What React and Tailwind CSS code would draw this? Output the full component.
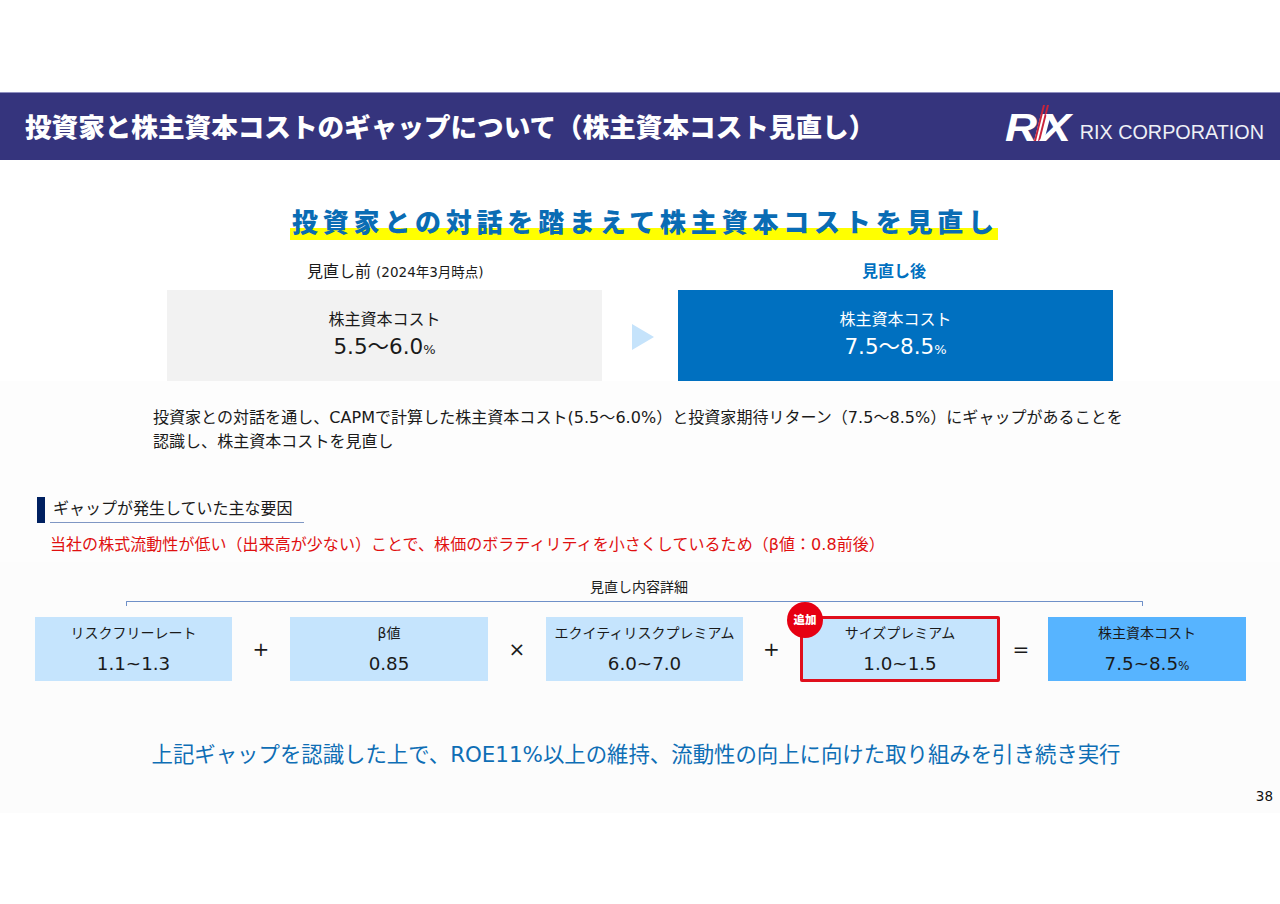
import React from "react";

const font = { fontFamily: '"DejaVu Sans", "Noto Sans CJK JP", sans-serif' };

function RixLogo() {
  return (
    <svg width="70" height="42" viewBox="0 0 70 42" overflow="visible" className="block">
      <text x="1" y="39" fontFamily="Liberation Sans" fontWeight="700" fontStyle="italic" fontSize="38" textLength="32" lengthAdjust="spacingAndGlyphs" fill="#fff">R</text>
      <polygon points="37,12 47,12 40,39 30,39" fill="#fff" />
      <polygon points="43,3 45,3 36,39 34,39" fill="#c8243c" />
      <polygon points="39,3 41,3 32,39 30,39" fill="#c8243c" />
      <text x="37" y="39" fontFamily="Liberation Sans" fontWeight="700" fontStyle="italic" fontSize="38" textLength="30" lengthAdjust="spacingAndGlyphs" fill="#fff">X</text>
    </svg>
  );
}

function FormulaBox({ label, value, unit, className }) {
  return (
    <div className={`h-[64px] flex flex-col items-center text-[#1a1a1a] ${className}`}>
      <div className="text-[14px] leading-[18px] mt-[7px]">{label}</div>
      <div className="text-[18.3px] leading-[24px] mt-[10px]">
        {value}
        {unit && <span className="text-[12px]">{unit}</span>}
      </div>
    </div>
  );
}

function Op({ children, className }) {
  return (
    <div className={`h-[64px] flex items-center justify-center text-[20px] text-[#1a1a1a] ${className}`}>
      {children}
    </div>
  );
}

export default function App() {
  return (
    <div className="w-[1280px] h-[904px] bg-white overflow-hidden" style={font}>
      <div className="h-[92px]" />

      <header className="h-[68px] bg-[#35347d] border-t border-[#8f8fc0] flex items-center justify-between">
        <h1 className="ml-[25px] mt-[3px] text-[26.6px] leading-none font-black text-white whitespace-nowrap">
          投資家と株主資本コストのギャップについて（株主資本コスト見直し）
        </h1>
        <div className="flex items-end mr-[16px] mb-[8px]">
          <RixLogo />
          <span
            className="ml-[6px] mb-[1px] text-[19.8px] leading-[22px] text-[#eef0f6] whitespace-nowrap"
            style={{ fontFamily: '"Liberation Sans", sans-serif' }}
          >
            RIX CORPORATION
          </span>
        </div>
      </header>

      <div className="h-[220px] bg-white pt-[47px]">
        <div className="ml-[290px] w-[708px] h-[33px] bg-[linear-gradient(transparent_21px,#ffff00_21px)]">
          <div className="pl-[2px] text-[26px] leading-[32px] font-black tracking-[4.8px] text-[#0a6cb4] whitespace-nowrap">
            投資家との対話を踏まえて株主資本コストを見直し
          </div>
        </div>

        <div className="flex mt-[22px] h-[28px] text-[16px] leading-[20px]">
          <div className="w-[555px] pl-[307px] text-[#1a1a1a] whitespace-nowrap">
            見直し前 <span className="text-[13.5px]">(2024年3月時点)</span>
          </div>
          <div className="ml-[307px] font-bold text-[#0070c0] whitespace-nowrap">見直し後</div>
        </div>

        <div className="flex items-center ml-[167px]">
          <div className="w-[435px] h-[91px] bg-[#f2f2f2] flex flex-col items-center pt-[19px] text-[#1a1a1a]">
            <div className="text-[16px] leading-[22px]">株主資本コスト</div>
            <div className="text-[21.5px] leading-[30px] mt-[1px]">
              5.5～6.0<span className="text-[13px]">%</span>
            </div>
          </div>
          <svg width="22" height="26" viewBox="0 0 22 26" className="ml-[30px] mr-[24px] mt-[3px]">
            <polygon points="0,0 22,13 0,26" fill="#c5e3fb" />
          </svg>
          <div className="w-[435px] h-[91px] bg-[#0070c0] flex flex-col items-center pt-[19px] text-white">
            <div className="text-[16px] leading-[22px]">株主資本コスト</div>
            <div className="text-[21.5px] leading-[30px] mt-[1px]">
              7.5～8.5<span className="text-[13px]">%</span>
            </div>
          </div>
        </div>
      </div>

      <div className="h-[181px] bg-[#fdfdfd] mt-[1px] pt-[25px]">
        <p className="ml-[153px] text-[16px] tracking-[0.04px] leading-[24px] text-[#1a1a1a] whitespace-nowrap">
          投資家との対話を通し、CAPMで計算した株主資本コスト(5.5～6.0%）と投資家期待リターン（7.5～8.5%）にギャップがあることを
          <br />
          認識し、株主資本コストを見直し
        </p>

        <div className="flex mt-[43px] ml-[37px]">
          <div className="w-[8px] h-[26px] bg-[#002060]" />
          <div className="ml-[5px] w-[254px] h-[26px] border-b border-[#7f97c4] pl-[3px] text-[16px] leading-[24px] text-[#1a1a1a] whitespace-nowrap">
            ギャップが発生していた主な要因
          </div>
        </div>

        <p className="mt-[10px] ml-[50px] text-[16px] tracking-[0.05px] leading-[24px] text-[#e01010] whitespace-nowrap">
          当社の株式流動性が低い（出来高が少ない）ことで、株価のボラティリティを小さくしているため（β値：0.8前後）
        </p>
      </div>

      <div className="h-[251px] bg-[#fcfcfc] flex flex-col">
        <div className="mt-[16px] text-center text-[14px] leading-[18px] text-[#1a1a1a] w-[1278px]">見直し内容詳細</div>
        <div className="mt-[5px] ml-[126px] w-[1017px] h-[5px] border-t border-x border-[#6f90c8] rounded-t-[1px]" />

        <div className="flex mt-[11px] pl-[35px]">
          <FormulaBox label="リスクフリーレート" value="1.1~1.3" className="w-[197px] bg-[#c5e4fd]" />
          <Op className="w-[58px]">+</Op>
          <FormulaBox label="β値" value="0.85" className="w-[198px] bg-[#c5e4fd]" />
          <Op className="w-[58px]">×</Op>
          <FormulaBox label="エクイティリスクプレミアム" value="6.0~7.0" className="w-[197px] bg-[#c5e4fd]" />
          <Op className="w-[57px]">+</Op>
          <div className="relative w-[200px] h-[66px] -mt-[1px]">
            <div className="h-[66px] border-[3px] border-[#e00f1c] rounded-[2px] bg-[#c5e4fd] flex flex-col items-center text-[#1a1a1a]">
              <div className="text-[14px] leading-[18px] mt-[5px]">サイズプレミアム</div>
              <div className="text-[18.3px] leading-[24px] mt-[10px]">1.0~1.5</div>
            </div>
            <div className="absolute -left-[13px] -top-[14px] w-[36px] h-[36px] pt-[2px] rounded-full bg-[#e60012] flex items-center justify-center text-[11.5px] font-black text-white">
              追加
            </div>
          </div>
          <Op className="w-[48px] pr-[6px]">=</Op>
          <FormulaBox label="株主資本コスト" value="7.5~8.5" unit="%" className="w-[198px] bg-[#57b4ff]" />
        </div>

        <p className="mt-[58px] text-center w-[1272px] text-[21.4px] leading-[30px] text-[#0e6eb5] whitespace-nowrap">
          上記ギャップを認識した上で、ROE11%以上の維持、流動性の向上に向けた取り組みを引き続き実行
        </p>

        <div className="mt-[17px] pr-[7px] text-right text-[13.5px] leading-[18px] text-[#111]">38</div>
      </div>
    </div>
  );
}
